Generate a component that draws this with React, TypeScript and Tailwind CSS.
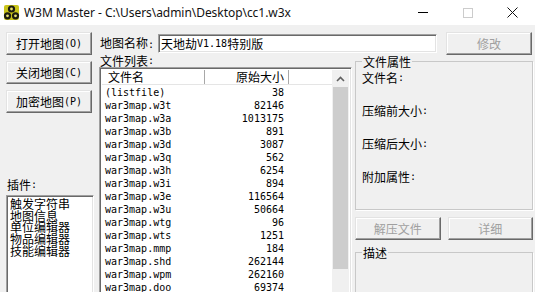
import React from 'react';

const files: [string, number][] = [
  ['(listfile)', 38],
  ['war3map.w3t', 82146],
  ['war3map.w3a', 1013175],
  ['war3map.w3b', 891],
  ['war3map.w3d', 3087],
  ['war3map.w3q', 562],
  ['war3map.w3h', 6254],
  ['war3map.w3i', 894],
  ['war3map.w3e', 116564],
  ['war3map.w3u', 50664],
  ['war3map.wtg', 96],
  ['war3map.wts', 1251],
  ['war3map.mmp', 184],
  ['war3map.shd', 262144],
  ['war3map.wpm', 262160],
  ['war3map.doo', 69374],
];

const plugins = ['触发字符串', '地图信息', '单位编辑器', '物品编辑器', '技能编辑器'];

// CJK runs at 12px, latin runs in a 6px-wide mono (like SimSun)
function M({ s }: { s: string }) {
  const parts = s.split(/([\u2e80-\u9fff]+)/);
  return (
    <>
      {parts.map((p, i) =>
        p === '' ? null : /[\u2e80-\u9fff]/.test(p) ? (
          <span key={i} className="font-['Noto_Sans_CJK_SC',sans-serif] text-[12px]">
            {p}
          </span>
        ) : (
          <span key={i} className="font-['DejaVu_Sans_Mono',monospace] text-[10px]">
            {p}
          </span>
        )
      )}
    </>
  );
}

function Btn({ label, disabled, className = '' }: { label: string; disabled?: boolean; className?: string }) {
  return (
    <div
      className={`h-[23px] flex items-center justify-center bg-[#f0f0f0] border border-t-[#e3e3e3] border-l-[#e3e3e3] border-b-[#696969] border-r-[#696969] shadow-[inset_-1px_-1px_0_#a0a0a0,inset_1px_1px_0_#fff] leading-[12px] whitespace-nowrap ${
        disabled ? 'text-[#a0a0a0]' : 'text-black'
      } ${className}`}
    >
      <M s={label} />
    </div>
  );
}

const sunken =
  'border border-t-[#a0a0a0] border-l-[#a0a0a0] border-b-white border-r-white shadow-[inset_1px_1px_0_#696969,inset_-1px_-1px_0_#e3e3e3]';

function Group({ title, className = '', children }: { title: string; className?: string; children?: React.ReactNode }) {
  return (
    <fieldset className={`border border-[#c8c8c8] shadow-[1px_1px_0_#fff] px-[6px] ${className}`}>
      <legend className="px-[1px] leading-[12px]">
        <M s={title} />
      </legend>
      {children}
    </fieldset>
  );
}

function AppIcon() {
  return (
    <svg width="17" height="17" viewBox="0 0 17 17">
      <rect x="1" y="1" width="15" height="15" rx="2" fill="#c9c41a" />
      <circle cx="8.5" cy="5" r="3.6" fill="#1c1c10" />
      <circle cx="4.5" cy="11.8" r="3.6" fill="#1c1c10" />
      <circle cx="12.5" cy="11.8" r="3.6" fill="#1c1c10" />
      <circle cx="8.5" cy="5" r="1.4" fill="#e8e070" />
      <circle cx="4.5" cy="11.8" r="1.4" fill="#e8e070" />
      <circle cx="12.5" cy="11.8" r="1.4" fill="#e8e070" />
    </svg>
  );
}

export default function App() {
  return (
    <div className="w-[535px] h-[292px] overflow-hidden bg-[#f0f0f0] text-black">
      {/* title bar */}
      <div className="h-[25px] bg-white flex items-center">
        <div className="ml-[3px] mr-[4px] flex items-center">
          <AppIcon />
        </div>
        <span className="font-['Noto_Sans',sans-serif] text-[12px] leading-[14px] tracking-[-0.05px] text-[#111]">
          W3M Master - C:\Users\admin\Desktop\cc1.w3x
        </span>
        <div className="ml-auto flex items-center h-full">
          <div className="w-[45px] h-full flex items-center justify-center">
            <div className="w-[10px] h-[1px] bg-black" />
          </div>
          <div className="w-[45px] h-full flex items-center justify-center">
            <div className="w-[10px] h-[10px] border border-[#cccccc]" />
          </div>
          <div className="w-[45px] h-full flex items-center justify-center">
            <svg width="11" height="11" viewBox="0 0 11 11">
              <path d="M0.5 0.5 L10.5 10.5 M10.5 0.5 L0.5 10.5" stroke="#111" strokeWidth="1" />
            </svg>
          </div>
        </div>
      </div>

      {/* body */}
      <div className="flex pt-[7px] pl-[6px] gap-[7px]">
        {/* left column */}
        <div className="w-[86px] flex flex-col">
          <div className="flex flex-col gap-[6px]">
            <Btn label="打开地图(O)" />
            <Btn label="关闭地图(C)" />
            <Btn label="加密地图(P)" />
          </div>
          <div className="mt-[66px] h-[12px] pl-[1px] leading-[12px] flex items-center">
            <M s="插件:" />
          </div>
          <div className={`mt-[4px] h-[120px] w-[88px] bg-white ${sunken} pl-[3px] pt-[2px]`}>
            {plugins.map((p) => (
              <div key={p} className="h-[11.7px] leading-[11.7px] whitespace-nowrap">
                <M s={p} />
              </div>
            ))}
          </div>
        </div>

        {/* right area */}
        <div className="w-[434px] flex flex-col">
          <div className="h-[23px] flex items-center">
            <div className="w-[59px] pl-[1px] leading-[12px] whitespace-nowrap">
              <M s="地图名称:" />
            </div>
            <div className={`w-[279px] h-[19px] bg-white ${sunken} flex items-center pl-[2px] leading-[12px] whitespace-nowrap`}>
              <M s="天地劫V1.18特别版" />
            </div>
            <Btn label="修改" disabled className="ml-[9px] w-[86px]" />
          </div>

          <div className="flex gap-[3px]">
            {/* file list */}
            <div className="w-[253px] flex flex-col">
              <div className="h-[12px] pl-[1px] leading-[12px] flex items-center">
                <M s="文件列表:" />
              </div>
              <div className={`h-[240px] bg-white ${sunken} flex p-[2px]`}>
                <div className="flex-1 flex flex-col">
                  <div className="h-[15px] flex border-b border-[#e5e5e5] leading-[12px]">
                    <div className="w-[103px] pl-[6px] border-r border-[#a8a8a8] flex items-center">
                      <M s="文件名" />
                    </div>
                    <div className="w-[84px] pr-[4px] border-r border-[#a8a8a8] flex items-center justify-end">
                      <M s="原始大小" />
                    </div>
                  </div>
                  {files.map(([name, size]) => (
                    <div key={name} className="h-[13px] flex items-center leading-[13px]">
                      <div className="w-[103px] pl-[3px]">
                        <M s={name} />
                      </div>
                      <div className="w-[84px] pr-[5px] text-right">
                        <M s={String(size)} />
                      </div>
                    </div>
                  ))}
                </div>
                {/* scrollbar */}
                <div className="w-[17px] flex flex-col bg-[#f0f0f0]">
                  <div className="h-[17px] flex items-center justify-center">
                    <svg width="9" height="6" viewBox="0 0 9 6">
                      <path d="M1 5 L4.5 1.5 L8 5" fill="none" stroke="#606060" strokeWidth="1.6" />
                    </svg>
                  </div>
                  <div className="mx-[1px] h-[182px] bg-[#cdcdcd]" />
                </div>
              </div>
            </div>

            {/* properties */}
            <div className="w-[178px] flex flex-col">
              <Group title="文件属性" className="h-[155px]">
                <div className="flex flex-col gap-[21px] pt-[4px] leading-[12px]">
                  <div className="h-[12px] flex items-center"><M s="文件名:" /></div>
                  <div className="h-[12px] flex items-center"><M s="压缩前大小:" /></div>
                  <div className="h-[12px] flex items-center"><M s="压缩后大小:" /></div>
                  <div className="h-[12px] flex items-center"><M s="附加属性:" /></div>
                </div>
              </Group>
              <div className="mt-[7px] flex gap-[7px]">
                <Btn label="解压文件" disabled className="w-[86px]" />
                <Btn label="详细" disabled className="w-[86px]" />
              </div>
              <Group title="描述" className="mt-[6px] h-[80px]" />
            </div>
          </div>
        </div>
      </div>
    </div>
  );
}
